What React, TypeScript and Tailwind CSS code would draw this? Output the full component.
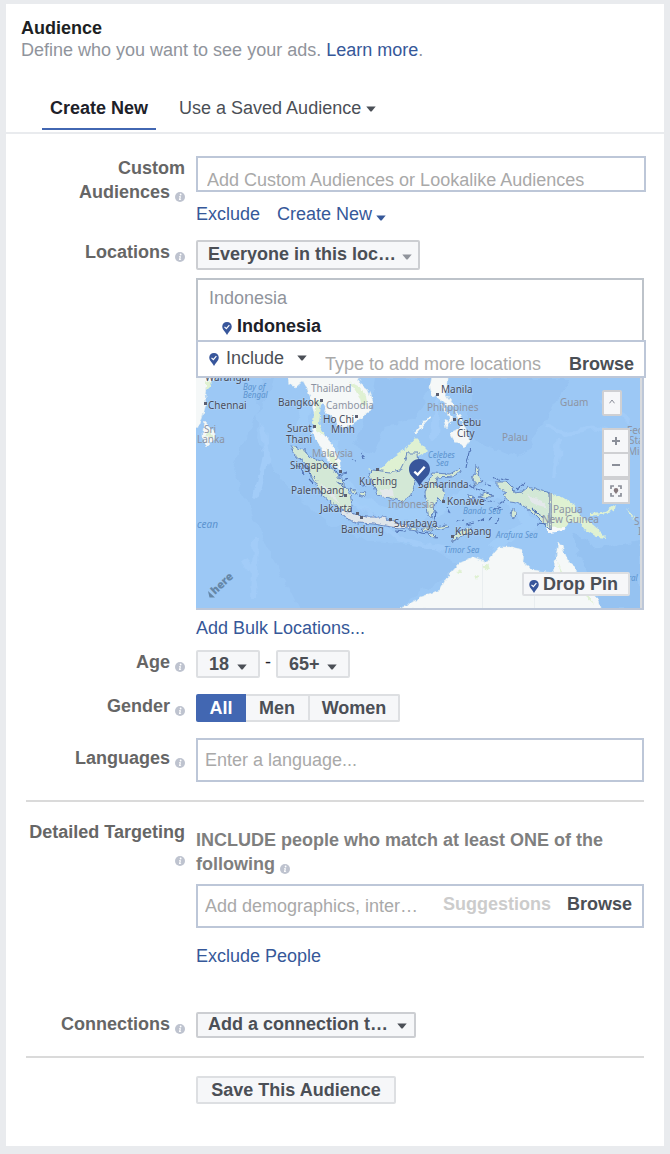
import type { ReactNode } from "react";

function Info() {
  return (
    <svg viewBox="0 0 10 10" className="inline-block h-[10px] w-[10px] align-[-4px]" aria-hidden="true">
      <circle cx="5" cy="5" r="5" fill="#bec3cf" />
      <circle cx="5.6" cy="2.5" r="0.9" fill="#fff" />
      <path d="M4 4.2h2L5.4 7.3h.7v.8H3.9L4.6 5H4z" fill="#fff" />
    </svg>
  );
}

function Pin({ className }: { className: string }) {
  return (
    <svg viewBox="0 0 20 26" className={className} aria-hidden="true">
      <path
        d="M10 0C4.400 0 .5 4 .5 9c0 3.800 1.800 6.500 4 9.200C6.700 21 8.500 23.500 10 26c1.500-2.500 3.300-5 5.500-7.800 2.200-2.700 4-5.400 4-9.200C19.500 4 15.600 0 10 0z"
        fill="#38569b"
      />
      <path d="M5 9.800l3.700 3.600 6-7" fill="none" stroke="#fff" strokeWidth="2.400" />
    </svg>
  );
}

function Caret({ className = "" }: { className?: string }) {
  return (
    <svg viewBox="0 0 10 6" className={`h-[6px] w-[10px] fill-current ${className}`} aria-hidden="true">
      <path d="M.3.500h9.400L5.800 5.200Q5 6 4.200 5.200z" />
    </svg>
  );
}

function Select({
  id,
  label,
  options,
  box,
  field,
  caret,
}: {
  id: string;
  label?: string;
  options: string[];
  box: string;
  field: string;
  caret: string;
}) {
  return (
    <div className={`grid items-center ${box}`}>
      <select
        id={id}
        aria-label={label}
        className={`col-start-1 row-start-1 h-full w-full appearance-none outline-none ${field}`}
      >
        {options.map((o) => (
          <option key={o}>{o}</option>
        ))}
      </select>
      <Caret className={`pointer-events-none col-start-1 row-start-1 justify-self-end ${caret}`} />
    </div>
  );
}

function Row({
  label,
  htmlFor,
  className = "",
  labelClass = "",
  children,
}: {
  label: string;
  htmlFor: string;
  className?: string;
  labelClass?: string;
  children: ReactNode;
}) {
  return (
    <div className={`flex gap-[11px] ${className}`}>
      <label
        htmlFor={htmlFor}
        className={`w-[159px] shrink-0 text-right font-bold text-[#666] ${labelClass}`}
      >
        {label} <Info />
      </label>
      <div className="min-w-0 flex-1">{children}</div>
    </div>
  );
}

type MapLabel = [string, number, number];

const cities: MapLabel[] = [
  ["Warangal", 205, 381],
  ["Chennai", 208, 409],
  ["Bangkok", 278, 406],
  ["Ho Chi", 323, 423],
  ["Minh", 331, 433],
  ["Surat", 287, 432],
  ["Thani", 286, 443],
  ["Singapore", 290, 469],
  ["Palembang", 291, 494],
  ["Jakarta", 320, 512],
  ["Bandung", 341, 533],
  ["Surabaya", 394, 527],
  ["Kuching", 359, 485],
  ["Samarinda", 418, 488],
  ["Konawe", 447, 505],
  ["Kupang", 455, 535],
  ["Manila", 441, 393],
  ["Cebu", 457, 426],
  ["City", 457, 437],
];

const countries: MapLabel[] = [
  ["Thailand", 311, 392],
  ["Cambodia", 326, 409],
  ["Malaysia", 312, 457],
  ["Philippines", 427, 411],
  ["Indonesia", 388, 508],
  ["Sri", 204, 433],
  ["Lanka", 197, 443],
  ["Palau", 502, 441],
  ["Guam", 560, 406],
  ["Papua", 553, 513],
  ["New Guinea", 542, 523],
  ["Fed", 627, 434],
  ["Stat", 629, 444],
  ["Mic", 628, 455],
  ["S", 634, 525],
  ["I", 638, 535],
];

const seas: MapLabel[] = [
  ["Bay of", 243, 390],
  ["Bengal", 243, 398],
  ["Celebes", 428, 458],
  ["Sea", 436, 466],
  ["Banda Sea", 463, 514],
  ["Arafura Sea", 496, 538],
  ["Timor Sea", 444, 553],
  ["ral", 628, 581],
];

const dots = [
  [205, 403], [321, 400], [356, 416], [314, 426], [340, 471], [345, 495], [357, 513],
  [361, 517], [390, 519], [377, 469], [437, 394], [454, 419], [452, 536], [443, 501],
];

function MapArt() {
  return (
    <svg
      viewBox="196 378 444 230"
      preserveAspectRatio="xMidYMid slice"
      className="block h-full w-full"
      role="img"
      aria-label="Map of Indonesia"
      fontFamily="'Noto Sans', sans-serif"
    >
      <defs>
        <filter id="coast" x="-5%" y="-5%" width="110%" height="110%">
          <feTurbulence type="fractalNoise" baseFrequency="0.2" numOctaves="2" seed="4" result="n" />
          <feDisplacementMap in="SourceGraphic" in2="n" scale="5" xChannelSelector="R" yChannelSelector="G" />
        </filter>
        <filter id="relief" x="0" y="0" width="100%" height="100%">
          <feTurbulence type="fractalNoise" baseFrequency="0.08" numOctaves="2" seed="9" result="n" />
          <feDisplacementMap in="SourceGraphic" in2="n" scale="12" xChannelSelector="R" yChannelSelector="G" />
        </filter>
      </defs>
      <rect x="190" y="370" width="460" height="250" fill="#9cc8f5" />
      <g filter="url(#relief)">
        <path d="M275 378h-15l-4 60 16 30 20 22 30 30 50 22 60 5 30 20-50 30-20 20 h-90 l-30-60-40-90z" fill="#98c4f2" />
        <path d="M375 378h60l-20 40-30 10-10 25-20-5 15-40zM470 378h100l-30 50-20 30-50-20z" fill="#97c3f2" />
        <path d="M570 530l30 18 40-8v68h-38l-15-30z" fill="#95c2f1" />
        <path d="M262 425l4 30-4 20-5 20M256 540l-2 60M244 560l10 12" fill="none" stroke="#a2ccf8" strokeWidth="6" />
        <path d="M545 425l20 8 30-5 30 10M560 440l-4 35M440 378l-6 60M600 400l30 20M340 490l60 50 50 10" fill="none" stroke="#a2ccf8" strokeWidth="5" />
        <path d="M335 440l-5 20 25 40 40 15 35-2 30-15 30-8 20 5 20 30-40 25M300 430l8-30" fill="none" stroke="#a4cef9" strokeWidth="12" strokeOpacity=".7" />
      </g>
      <g filter="url(#coast)">
        <g fill="#f5f8f8" stroke="#e2ecef" strokeWidth=".6">
          <path d="M190 370h32l-7 9-9 9-1 8 1 8-3 11-3 9-10 7z" />
          <path d="M205 422l5 5 5 7-1 8-7 4-4-6v-10z" />
          <path d="M286 370l3 14 7 3 7-6 4 7 4 12 3 13v12l-2 7 6 10 5 11 10 14 8 3-2-13-6-12-9-10-5-7-2-8 1-13 5-4 3 9 7 5 4 8 9 3 12-8 13-10 1-10-4-10-10-8 4-12z" />
          <path d="M433 370h14v17l-2 6 5 7 6 8-9-3-9-7-6-3-2-8zM450 433l7-3 6-6 5 8 1 10-4 6-5-5-5-1zM441 405l6 3-1 5zM448 412l6 6-4 5zM455 410l5 5 3 7-5-3zM444 420l5 2-3 6z" />
          <path d="M400 609l20-12 20-7 7-13 13-14 13-6 14 5 10-12 3-3h13l10 3-1 12 11 8 20 3 3-16 2-15 4 5 6 15 7 5 3 10 12 13 8 10 3 12z" />
        </g>
        <path d="M430 416l-15 17" stroke="#f2f7f5" strokeWidth="2" />
        <g fill="#dff1d2">
          <path d="M316 400l5 3-2 22 6 10-6-2-6-10zM325 447l10 10 3 12-8-8zM350 382l8 4 8 10 1 8-5 4-2-10z" />
          <path d="M368 469l9 2 6-3 9-10 15-10 8-10 5 5 8 8-9 5-12 0-4 14-12 4-16 1z" />
          <path d="M550 493l12 4 13 8 2 7 10 8 10 8 10 10-10-1-12-7-5-7-10-1-5 6-15 2zM590 513l13-1 12-7-1 5-11 4-13 2zM627 508l5 6 3 6-5-6z" />
          <path d="M206 380l6 4-6 6zM205 435l5-4 3 6zM483 567l5-3 2 4-4 3zM475 575l4 1-2 4zM456 571l5-2 1 3-5 1zM558 560l3 10 6 10-6-5zM578 582l8 8 8 14-9-8z" />
        </g>
        <path d="M546 528l20-1-2 4-15 2z" fill="#f8fafa" />
        <g fill="#d3e8d6" stroke="#5f80bd" strokeWidth=".9">
          <path d="M290 446l15 4 3 6 15 6 10 8 10 13 7 10 2 12-2 9-12-6-15-13-10-15-8-17-10-8z" />
          <path d="M340 511l10 1 7 3 10 2 16 0 12 6 13 2 1 4-18-2-17-3-16-1-13-5z" fill="#dfe5ea" />
          <path d="M373 470l17 2 10-2 5-10 2-7h11l1 14-4 16-5 14-7 5-13-4-13-3-4-12-4-9z" />
          <path d="M432 473l18 1 10-6 1 4-9 5-15 1-2 7 8 3 2 7-3 7-5-5-2 6-3 14-4-2-1-12-2-10 3-10z" />
          <path d="M497 482h10l6 6 1 5 8-1 6-5 22 6v37l-8-8-12-12-12-7-8-1-8-7 6-3-11-5z" />
          <path d="M410 527l8 1-1 3-7-1zM421 528l9 0 2 3-8 0zM435 527l11-2 2 2-12 3zM427 533l6 1 4 4-6-1zM452 539l8-8 12-4-1 4-11 6-7 4zM350 488l5 2 1 4-4-1zM359 493l6-2 1 4-5 1z" />
          <path d="M476 465l3 4-1 7 4 5-5 1-2 5-2-9 2-4zM478 496l8-3 8 3-5 2zM468 496l5-1 1 3-5 1zM512 508l4 3-1 7-4-1z" />
        </g>
        <path
          d="M297 464l4 5 3 6M302 464l8 9M309 479l4 4M318 489l4 7M306 466l4 5M313 476l4 5M334 470l8 8M338 475l9-2M342 482l6-4M337 482l8 5M352 460l4 1M362 452l2 7M466 468l3-16 2-3M485 484l6 2M493 477l8 4M487 494l5 1M501 478l8 2M517 489l8-6M505 500l-6 4M494 510l5-4M495 523l4-5M499 512l3-4M481 489l3 3M475 488l5 2M456 522l8-2M466 525l8-2M478 522l7-4M489 520l3-3M416 532l12 2M435 521l1-12M447 508l3 5M395 530l10 1M360 484l6 3M484 500l12 2M532 508l5 5 7 5M536 523l12 1M470 485l5 4"
          fill="none"
          stroke="#5173b5"
          strokeWidth="1.100"
        />
        <path d="M380 489h12l2 7-13 1zM527 495l15 6 6 7-14-4zM320 482l14 12 6 10-10-8z" fill="#e4e8eb" />
      </g>
      <path d="M549.500 493v37M551.500 493v37" stroke="#8f9bb0" strokeWidth=".8" />
      <path d="M482.500 564v44M534.500 575v33" stroke="#e6ebee" strokeWidth=".8" />
      <g fontSize="10" fill="#8d94a3">
        {countries.map(([t, x, y]) => (
          <text key={t} x={x} y={y}>{t}</text>
        ))}
      </g>
      <g fontSize="8" fontStyle="italic" fill="#5b93cf">
        {seas.map(([t, x, y]) => (
          <text key={t} x={x} y={y}>{t}</text>
        ))}
        <text x="197" y="528" fontSize="10">cean</text>
      </g>
      <g fontSize="10" fill="#474c5c" stroke="#fff" strokeOpacity=".25" strokeWidth="1" paintOrder="stroke">
        {cities.map(([t, x, y]) => (
          <text key={t} x={x} y={y}>{t}</text>
        ))}
      </g>
      <g fill="#5c6072">
        {dots.map(([x, y]) => (
          <rect key={`${x}-${y}`} x={x - 1} y={y - 1} width="3" height="3" />
        ))}
      </g>
      <g fill="#6587a8">
        <text x="215" y="595" fontSize="11" fontWeight="900" transform="rotate(-43 215 595)">here</text>
        <path d="M208 591l7 6.500-5.500 0z" />
      </g>
      <g transform="translate(409 459)">
        <path
          d="M10.500 0C4.600 0 0 4.500 0 10.300c0 4.600 2.700 7.200 5.600 9.900 2.300 2.200 3.900 4.400 4.900 7.300 1-2.900 2.600-5.100 4.900-7.300 2.900-2.700 5.600-5.300 5.600-9.900C21 4.500 16.400 0 10.500 0z"
          fill="#38569b"
        />
        <path d="M5.300 12.600l3.400 3 7-7.800" fill="none" stroke="#fff" strokeWidth="2.400" />
      </g>
    </svg>
  );
}

const mapButton =
  "flex h-[26px] items-center justify-center border-2 border-[#cfd0d3] bg-[#f6f7f9] text-[#8b8f99]";

function LocationMap() {
  return (
    <div className="relative h-[232px] border-r-2 border-b-2 border-[#bdc7d8]">
      <div className="h-full border-r-2 border-[#d9dbde]">
        <MapArt />
      </div>
      <div className="absolute top-3 right-3 flex w-7 flex-col">
        <button type="button" aria-label="Collapse map" className={`mb-3 w-5 rounded-xs ${mapButton}`}>
          <svg viewBox="0 0 6 5" className="mb-[3px] h-[5px] w-[6px]" aria-hidden="true">
            <path d="M.5 4.300L3 1l2.500 3.300" fill="none" stroke="currentColor" />
          </svg>
        </button>
        <button type="button" aria-label="Zoom in" className={mapButton}>
          <svg viewBox="0 0 8 8" className="h-2 w-2" aria-hidden="true">
            <path d="M4 0v8M0 4h8" stroke="currentColor" strokeWidth="2" />
          </svg>
        </button>
        <button type="button" aria-label="Zoom out" className={`-mt-[2px] ${mapButton}`}>
          <svg viewBox="0 0 8 8" className="h-2 w-2" aria-hidden="true">
            <path d="M0 4h8" stroke="currentColor" strokeWidth="2" />
          </svg>
        </button>
        <button type="button" aria-label="Fit to locations" className={mapButton}>
          <svg viewBox="0 0 12 12" className="h-3 w-3" aria-hidden="true">
            <path d="M1 4V1h3M8 1h3v3M11 8v3H8M4 11H1V8" fill="none" stroke="currentColor" strokeWidth="1.700" />
            <path d="M6 3a2.300 2.300 0 00-2.300 2.300C3.700 7 5.300 7.300 6 9.300c.7-2 2.300-2.300 2.300-4A2.300 2.300 0 006 3z" fill="#85787c" />
          </svg>
        </button>
      </div>
      <button
        type="button"
        className="absolute right-3 bottom-3 flex h-6 w-[108px] items-center gap-1 rounded-xs border-2 border-[#dddfe2] bg-[#f6f7f9] pl-[5px] leading-5 font-bold text-[#4b4f56]"
      >
        <Pin className="mt-1 h-[13px] w-[10px] shrink-0" />
        <span className="whitespace-nowrap">Drop Pin</span>
      </button>
    </div>
  );
}

const link = "text-[#365899] hover:underline";
const greyBox = "rounded-xs border-2 border-[#dddfe2] bg-[#f6f7f9] font-bold text-[#4b4f56]";
const greyBoxDark = "rounded-xs border-2 border-[#ccced2] bg-[#f6f7f9] font-bold text-[#4b4f56]";
const input = "border-2 border-[#bdc7d8] bg-white outline-none placeholder:text-[#a9a9a9]";

export default function App() {
  return (
    <div className="flow-root bg-[#e9ebee] font-['Liberation_Sans',Arial,sans-serif] text-[18px] leading-6">
      <main className="mx-[6px] mt-1 mb-2 bg-white pt-[13px] pb-[42px]">
        <header className="px-[15px] leading-[22px]">
          <h1 className="font-bold text-[#1d1f23]">Audience</h1>
          <p className="text-[#90949c]">
            Define who you want to see your ads. <a href="#learn" className={link}>Learn more</a>.
          </p>
        </header>

        <nav className="mt-[35px] flex gap-[15px] border-b-2 border-[#e9ebee] pb-[2px] pl-9">
          <button type="button" className="border-b-2 border-[#4267b2] px-2 pb-2 font-bold text-[#1d2129]">
            Create New
          </button>
          <button type="button" className="flex items-center gap-[5px] border-b-2 border-transparent px-2 pb-2 text-[#4b4f56]">
            Use a Saved Audience
            <Caret className="mt-[2px]" />
          </button>
        </nav>

        <form className="px-5 pt-[22px]" onSubmit={(e) => e.preventDefault()}>
          <Row label="Custom Audiences" htmlFor="custom" labelClass="pl-10">
            <div className="-mr-[2px]">
              <input
                id="custom"
                placeholder="Add Custom Audiences or Lookalike Audiences"
                className={`block h-9 w-full pt-3 pl-[9px] ${input}`}
              />
            </div>
            <div className="mt-[10px] flex gap-[17px]">
              <a href="#exclude" className={link}>Exclude</a>
              <a href="#create" className={`flex items-center gap-1 ${link}`}>
                Create New
                <Caret className="mt-2" />
              </a>
            </div>
          </Row>

          <Row label="Locations" htmlFor="locations" className="mt-[14px]">
            <Select
              id="locations"
              options={["Everyone in this loc…"]}
              box={`h-[30px] w-56 ${greyBoxDark}`}
              field="pb-[2px] pl-[10px]"
              caret="mr-[6px] mt-[3px] text-[#90949c]"
            />
            <div className="mt-2 border-2 border-b-0 border-[#bdc3ca] pt-[6px] pb-[2px]">
              <div className="pl-[11px] text-[#90949c]">Indonesia</div>
              <div className="mt-1 flex items-center gap-[5px] pl-6 font-bold text-[#1d2129]">
                <Pin className="mt-[5px] h-[13px] w-[10px]" />
                Indonesia
              </div>
            </div>
            <div className="-mr-[2px] flex h-[38px] border-2 border-[#bdc7d8]">
              <div className="flex h-8 shrink-0 items-center pl-[11px]">
                <Pin className="mt-[2px] h-[13px] w-[10px]" />
                <Select
                  id="mode"
                  label="Include or exclude"
                  options={["Include"]}
                  box="h-8 w-[90px] text-[#4b4f56]"
                  field="pl-[7px]"
                  caret="mr-[2px]"
                />
              </div>
              <input
                aria-label="Add locations"
                placeholder="Type to add more locations"
                className="ml-4 min-w-0 flex-1 pt-[10px] outline-none placeholder:text-[#a9a9a9]"
              />
              <button type="button" className="pt-[10px] pr-[10px] font-bold text-[#4b4f56]">Browse</button>
            </div>
            <LocationMap />
            <a href="#bulk" className={`mt-[6px] block ${link}`}>Add Bulk Locations...</a>
          </Row>

          <Row label="Age" htmlFor="age-min" className="mt-[10px]">
            <div className="flex">
              <Select
                id="age-min"
                options={["18"]}
                box={`h-7 w-16 ${greyBox}`}
                field="pl-[11px]"
                caret="mr-[11px] mt-[5px]"
              />
              <span className="w-4 text-center text-[#1d2129]">-</span>
              <Select
                id="age-max"
                label="Maximum age"
                options={["65+"]}
                box={`h-7 w-[74px] ${greyBox}`}
                field="pl-[11px]"
                caret="mr-[11px] mt-[5px]"
              />
            </div>
          </Row>

          <Row label="Gender" htmlFor="gender-all" className="mt-4">
            <div className="flex h-7 font-bold text-[#4b4f56]">
              <button id="gender-all" type="button" className="w-[50px] rounded-l-xs bg-[#4267b2] text-white">All</button>
              <button type="button" className="w-16 border-2 border-l-0 border-[#dddfe2] bg-[#f6f7f9]">Men</button>
              <button type="button" className="w-[90px] rounded-r-xs border-2 border-l-0 border-[#dddfe2] bg-[#f6f7f9]">Women</button>
            </div>
          </Row>

          <Row label="Languages" htmlFor="languages" className="mt-4" labelClass="pt-2">
            <input
              id="languages"
              placeholder="Enter a language..."
              className={`block h-11 w-full px-[7px] ${input}`}
            />
          </Row>

          <hr className="mt-[18px] border-t-2 border-[#dadada]" />

          <Row label="Detailed Targeting" htmlFor="targeting" className="mt-[18px]">
            <p className="pt-2 font-bold text-[#7f7f7f]">
              INCLUDE people who match at least ONE of the following <Info />
            </p>
            <div className="mt-2 flex h-11 border-2 border-[#bdc7d8]">
              <input
                id="targeting"
                placeholder="Add demographics, interests or behaviors"
                className="ml-[7px] min-w-0 flex-1 text-ellipsis outline-none placeholder:text-[#a9a9a9]"
              />
              <button type="button" className="ml-6 pb-1 font-bold text-[#ccc]">Suggestions</button>
              <button type="button" className="ml-4 pr-[10px] pb-1 font-bold text-[#4b4f56]">Browse</button>
            </div>
            <a href="#exclude-people" className={`mt-4 block ${link}`}>Exclude People</a>
          </Row>

          <Row label="Connections" htmlFor="connections" className="mt-11">
            <Select
              id="connections"
              options={["Add a connection t…"]}
              box={`h-[26px] w-[220px] ${greyBoxDark}`}
              field="pl-[10px] pb-[2px] leading-5"
              caret="mr-[7px] mt-[2px]"
            />
          </Row>

          <hr className="mt-[18px] border-t-2 border-[#dadada]" />

          <button type="submit" className={`mt-[18px] ml-[170px] block h-7 w-[200px] leading-6 ${greyBox}`}>
            Save This Audience
          </button>
        </form>
      </main>
    </div>
  );
}
